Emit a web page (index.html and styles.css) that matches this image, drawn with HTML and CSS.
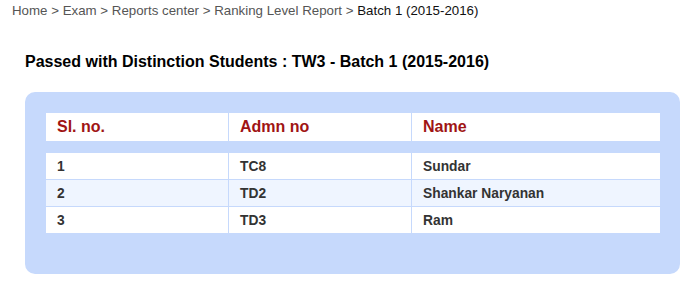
FILE: index.html
```html
<!DOCTYPE html>
<html>
<head>
<meta charset="utf-8">
<link rel="stylesheet" href="styles.css">
</head>
<body>
<div class="crumbs">
  <span>Home</span> &gt; <span>Exam</span> &gt; <span>Reports center</span> &gt; <span>Ranking Level Report</span> &gt; <span class="current">Batch 1 (2015-2016)</span>
</div>
<h2 class="title">Passed with Distinction Students : TW3 - Batch 1 (2015-2016)</h2>
<div class="panel">
  <div class="grid head">
    <div class="cell">Sl. no.</div>
    <div class="cell">Admn no</div>
    <div class="cell">Name</div>
  </div>
  <div class="rows">
    <div class="grid row">
      <div class="cell">1</div>
      <div class="cell">TC8</div>
      <div class="cell">Sundar</div>
    </div>
    <div class="grid row alt">
      <div class="cell">2</div>
      <div class="cell">TD2</div>
      <div class="cell">Shankar Naryanan</div>
    </div>
    <div class="grid row">
      <div class="cell">3</div>
      <div class="cell">TD3</div>
      <div class="cell">Ram</div>
    </div>
  </div>
</div>
</body>
</html>
```

FILE: styles.css
```css
* { box-sizing: border-box; }
body {
  margin: 0;
  font-family: "Liberation Sans", Arial, sans-serif;
  background: #fff;
  color: #333;
}
.crumbs {
  padding: 2px 0 0 12px;
  font-size: 13.3px;
  line-height: 17px;
  color: #555;
}
.crumbs .current { color: #111; }
.title {
  margin: 33px 0 0 25px;
  font-size: 16px;
  line-height: 20px;
  font-weight: bold;
  color: #000;
}
.panel {
  margin: 20px 6px 0 25px;
  background: #c6d9fc;
  border-radius: 10px;
  padding: 21px 20px 41px 21px;
}
.grid {
  display: grid;
  grid-template-columns: 182px 183px 1fr;
  background: #fff;
}
.cell {
  padding-left: 11px;
  border-left: 1px solid #c6d9fc;
  display: flex;
  align-items: center;
}
.cell:first-child { border-left: none; }
.head { height: 28px; }
.head .cell {
  font-size: 16px;
  font-weight: bold;
  color: #a01414;
}
.rows {
  margin-top: 12px;
  display: flex;
  flex-direction: column;
  gap: 1px;
}
.row { height: 26px; }
.row .cell {
  font-size: 13.8px;
  font-weight: bold;
  color: #333;
}
.row.alt { background: #eff5ff; }
```
